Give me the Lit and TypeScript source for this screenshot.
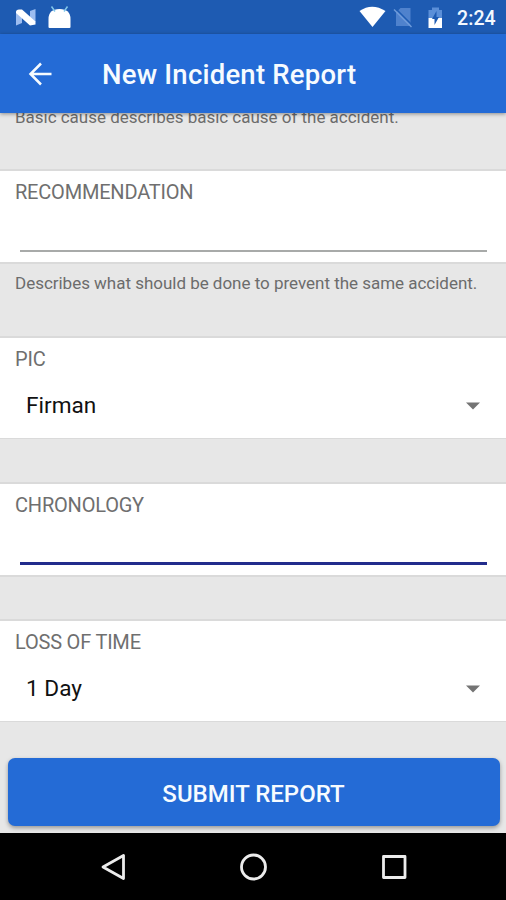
import { LitElement, html, css, nothing } from "lit";
import { customElement, property } from "lit/decorators.js";

@customElement("status-bar")
class StatusBar extends LitElement {
  static styles = css`
    :host { display: flex; align-items: center; height: 34px; background: #1e5bb2; color: #f4f9ff; }
    svg { display: block; flex: none; }
    .notices { margin-left: 14px; }
    .system { margin-left: auto; }
    .clock { width: 39px; margin: 3px 10px 0 9px; font: 500 19.5px/24px Roboto, sans-serif; letter-spacing: 0.1px; white-space: nowrap; }
  `;
  render() {
    return html`
      <svg class="notices" width="60" height="34" viewBox="14 0 60 34">
        <path d="M16 11.5L22 14V23L16 25.5zM30 11L35.5 9V22L30 20z" fill="#9dbdf0" />
        <path d="M16 12Q16 9.5 19 9.5H22L35.5 21.5V24.5L30 25.5L16 13z" fill="#fff" />
        <path d="M48.5 27V19Q48.5 9 59.5 9Q70.5 9 70.5 19V27Q70.5 28 69.5 28H49.5Q48.5 28 48.5 27z" fill="#fff" />
        <path d="M51.5 6.5L55 11.5M67.5 6.5L64 11.5" stroke="#84c8ea" stroke-width="1.5" />
      </svg>
      <svg class="system" width="90" height="34" viewBox="358 0 90 34">
        <path d="M359.5 11Q372 2.5 385.5 11L372.5 27z" fill="#fff" />
        <path d="M400.5 8H410.5V26H396V12.5z" fill="#4f82cd" />
        <path d="M395.5 8.5L413 26" stroke="#1e5bb2" stroke-width="1.6" />
        <path d="M394 9.5L411.5 27" stroke="#6f9cdb" stroke-width="1.4" />
        <path d="M428.5 10H432V7.5H439V10H442V18H428.5z" fill="#5b8fd8" />
        <path d="M428.5 18H442V28H428.5z" fill="#fff" />
        <path d="M436.5 11L432 19H434.5V25L439 17H436.5z" fill="#1e5bb2" />
      </svg>
      <span class="clock">2:24</span>
    `;
  }
}

@customElement("title-bar")
class TitleBar extends LitElement {
  static styles = css`
    :host { display: flex; align-items: center; height: 79px; background: #246bd6; color: #f6fbff; position: relative; box-shadow: 0 1px 4px rgba(0, 0, 0, 0.4); }
    svg { display: block; margin-left: 26px; }
    .title { margin: 2px 0 0 50px; font: 500 27.5px/36px Roboto, sans-serif; letter-spacing: 0.22px; white-space: nowrap; }
  `;
  render() {
    return html`
      <svg width="26" height="26" viewBox="0 0 26 26" fill="none" stroke="currentColor" stroke-width="2.5">
        <path d="M25.5 13H4.5M15 2.5L4.5 13L15 23.5" />
      </svg>
      <span class="title">New Incident Report</span>
    `;
  }
}

@customElement("form-card")
class FormCard extends LitElement {
  @property() label = "";
  @property() value = "";
  @property() kind = "text";

  static styles = css`
    :host { display: block; box-sizing: border-box; background: #fff; border-top: 2px solid #dadada; border-bottom: 2px solid #dadada; height: 95px; }
    :host([kind="select"]) { height: 103px; border-bottom-width: 1px; }
    .label { padding: 9px 15px 0; font: 400 20px/25px Roboto, sans-serif; color: #6f6f6f; letter-spacing: -0.2px; white-space: nowrap; }
    .line { margin: 45px 19px 0 20px; height: 2px; background: #a8aaa9; }
    .focused { margin-top: 44px; height: 3px; background: #222c8c; }
    .choice { display: flex; justify-content: space-between; align-items: center; height: 30px; margin: 19px 26px 0; font: 400 22.6px/30px Roboto, sans-serif; color: #111; }
    svg { display: block; margin-top: -1px; }
  `;
  render() {
    return html`
      <div class="label">${this.label}</div>
      ${this.kind === "select"
        ? html`<div class="choice">
            <span>${this.value}</span>
            <svg width="14" height="8" viewBox="0 0 14 8"><path d="M0 0.5H14L7 7.5z" fill="#747474" /></svg>
          </div>`
        : nothing}
      ${this.kind === "text" ? html`<div class="line"></div>` : nothing}
      ${this.kind === "focused" ? html`<div class="line focused"></div>` : nothing}
    `;
  }
}

@customElement("nav-bar")
class NavBar extends LitElement {
  static styles = css`
    :host { display: flex; justify-content: center; align-items: center; gap: 112px; height: 67px; background: #000; }
    svg { display: block; fill: none; stroke: #ececec; stroke-width: 2.8; stroke-linejoin: round; }
  `;
  render() {
    return html`
      <svg width="28" height="28" viewBox="0 0 28 28"><path d="M4 14L24.5 2.5V25.5z" /></svg>
      <svg width="28" height="28" viewBox="0 0 28 28"><circle cx="14.5" cy="14" r="12" /></svg>
      <svg width="28" height="28" viewBox="0 0 28 28"><rect x="4.5" y="3.5" width="21.5" height="21" /></svg>
    `;
  }
}

@customElement("app-root")
class AppRoot extends LitElement {
  static styles = css`
    :host { display: flex; flex-direction: column; height: 900px; overflow: hidden; background: #e7e7e7; font-family: Roboto, sans-serif; }
    status-bar, title-bar, nav-bar { flex: none; }
    title-bar { z-index: 1; }
    .form { flex: 1; min-height: 0; display: flex; flex-direction: column; margin-top: -12px; }
    .form > * { flex: none; }
    .hint { box-sizing: border-box; padding: 8px 15px 0; height: 72px; font: 400 17px/22px Roboto, sans-serif; color: #6c6c6c; white-space: nowrap; letter-spacing: -0.02px; }
    .first { height: 68px; padding-top: 5px; }
    .gap { height: 43px; }
    .gap.short { height: 42px; }
    .submit { margin: 36px 6px 0 8px; height: 68px; border: 0; border-radius: 7px; background: #246bd6; color: #f6fbff; font: 500 24px/68px Roboto, sans-serif; padding: 2px 1px 0 0; box-shadow: 0 2px 4px rgba(0, 0, 0, 0.35); }
  `;
  render() {
    return html`
      <status-bar></status-bar>
      <title-bar></title-bar>
      <div class="form">
        <div class="hint first">Basic cause describes basic cause of the accident.</div>
        <form-card label="RECOMMENDATION"></form-card>
        <div class="hint">Describes what should be done to prevent the same accident.</div>
        <form-card kind="select" label="PIC" value="Firman"></form-card>
        <div class="gap"></div>
        <form-card kind="focused" label="CHRONOLOGY"></form-card>
        <div class="gap short"></div>
        <form-card kind="select" label="LOSS OF TIME" value="1 Day"></form-card>
        <button class="submit">SUBMIT REPORT</button>
      </div>
      <nav-bar></nav-bar>
    `;
  }
}
